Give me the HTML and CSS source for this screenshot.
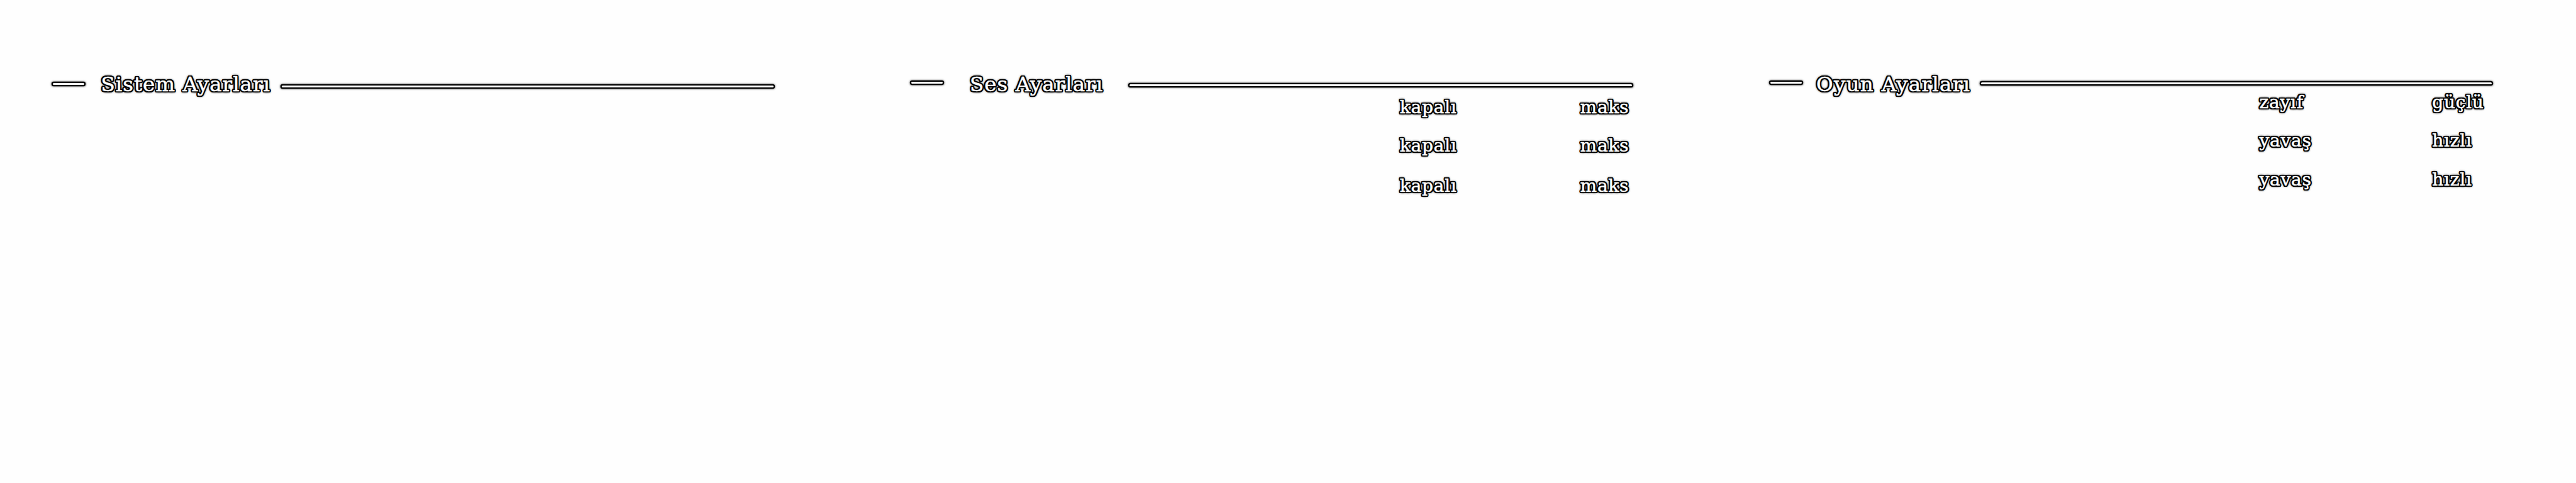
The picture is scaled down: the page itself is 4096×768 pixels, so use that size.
FILE: index.html
```html
<!DOCTYPE html>
<html lang="tr">
<head>
<meta charset="utf-8">
<title>Ayarlar</title>
<link rel="stylesheet" href="styles.css">
</head>
<body>
<main class="settings">
  <section class="panel system">
    <header class="heading"><span class="dash"></span><h2 class="title">Sistem Ayarları</h2><span class="rule"></span></header>
  </section>
  <section class="panel sound">
    <header class="heading"><span class="dash"></span><h2 class="title">Ses Ayarları</h2><span class="rule"></span></header>
    <div class="ranges">
      <span class="label">kapalı</span><span class="label">maks</span>
      <span class="label">kapalı</span><span class="label">maks</span>
      <span class="label">kapalı</span><span class="label">maks</span>
    </div>
  </section>
  <section class="panel game">
    <header class="heading"><span class="dash"></span><h2 class="title">Oyun Ayarları</h2><span class="rule"></span></header>
    <div class="ranges">
      <span class="label">zayıf</span><span class="label">güçlü</span>
      <span class="label">yavaş</span><span class="label">hızlı</span>
      <span class="label">yavaş</span><span class="label">hızlı</span>
    </div>
  </section>
</main>
</body>
</html>
```
FILE: styles.css
```css
* { box-sizing: border-box; }
body {
  margin: 0;
  background: #fefefe;
  color: #fff;
  font-family: "DejaVu Serif", serif;
  overflow: hidden;
}
.settings {
  display: grid;
  grid-template-columns: repeat(3, 1fr);
  width: 4096px;
  height: 768px;
}
.panel { padding-top: 113.5px; }
.heading {
  display: grid;
  align-items: start;
  height: 40px;
  padding-left: 84px;
}
.system .heading { grid-template-columns: 76.4px 288.1px 781.7px; }
.sound .heading { grid-template-columns: 92.6px 253.7px 799.8px; }
.game .heading { grid-template-columns: 72.6px 261.8px 811.8px; padding-left: 84.7px; }
.dash, .rule {
  height: 3px;
  border-radius: 1.5px;
  background: #fff;
  box-shadow: 0 0 0 2.2px #000, 0 0 3px 2.6px rgba(0, 0, 0, .6);
}
.dash { width: 50px; margin-top: 16.5px; }
.system .dash { margin-top: 18.2px; }
.system .rule { margin-top: 22.2px; }
.sound .rule { margin-top: 20.9px; }
.game .rule { margin-top: 17.3px; }
.title, .label {
  margin: 0;
  font-weight: 400;
  white-space: nowrap;
  -webkit-text-stroke: .5px #fff;
  text-shadow:
    2.3px 0 0 #000, 2.12px .88px 0 #000, 1.63px 1.63px 0 #000, .88px 2.12px 0 #000,
    0 2.3px 0 #000, -.88px 2.12px 0 #000, -1.63px 1.63px 0 #000, -2.12px .88px 0 #000,
    -2.3px 0 0 #000, -2.12px -.88px 0 #000, -1.63px -1.63px 0 #000, -.88px -2.12px 0 #000,
    0 -2.3px 0 #000, .88px -2.12px 0 #000, 1.63px -1.63px 0 #000, 2.12px -.88px 0 #000,
    0 0 4px #000, 0 0 4px #000, 0 0 4px #000;
}
.title {
  font-size: 32.5px;
  line-height: 40px;
  letter-spacing: 1.05px;
}
.game .title { letter-spacing: 1.3px; }
.label {
  font-size: 28px;
  line-height: 34px;
  letter-spacing: .75px;
}
.ranges { display: grid; }
.sound .ranges {
  grid-template-columns: 286.9px auto;
  grid-template-rows: 61.2px 63.7px 34px;
  padding-left: 860.4px;
  margin-top: .2px;
}
.game .ranges {
  grid-template-columns: 274.8px auto;
  grid-template-rows: 61.9px 61.8px 34px;
  padding-left: 861.8px;
  margin-top: -8px;
}
```
